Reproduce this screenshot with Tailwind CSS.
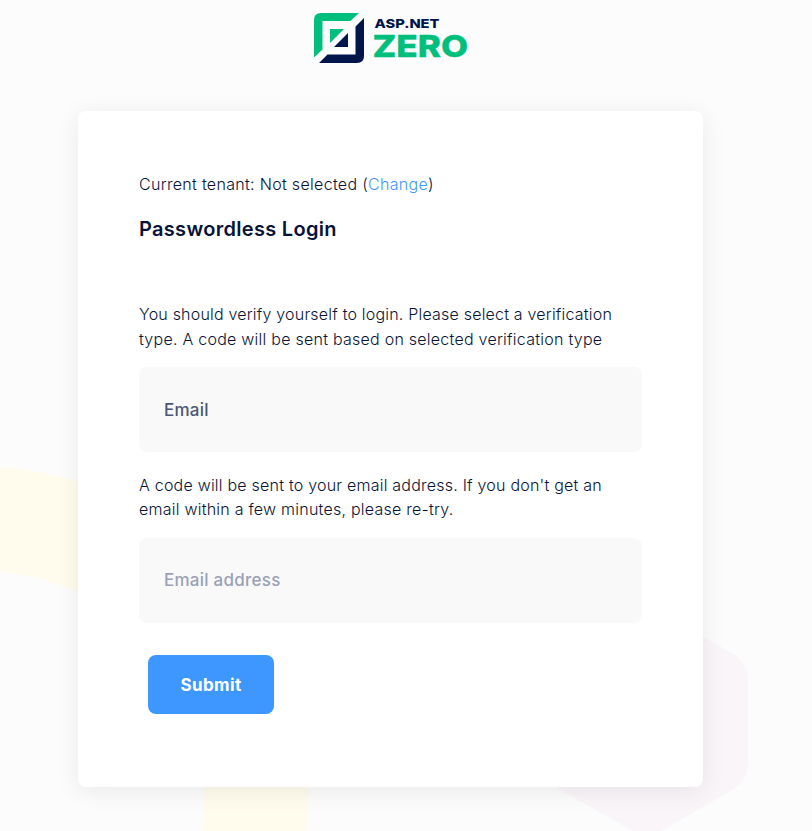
<!DOCTYPE html>
<html lang="en">
<head>
<meta charset="utf-8">
<title>Passwordless Login</title>
<script src="https://cdn.jsdelivr.net/npm/@tailwindcss/browser@4"></script>
</head>
<body class="relative h-[831px] w-[812px] overflow-hidden bg-[#fcfcfc] font-['Inter',sans-serif] text-[#071437]">
<svg class="absolute inset-0" width="812" height="831" viewBox="0 0 812 831" aria-hidden="true">
  <circle cx="-17.500" cy="793" r="274" fill="none" stroke="#fffbed" stroke-width="104"/>
  <path d="M662 613.500L731 652.500Q748 663 748 681V763Q748 781 731 790.800L662 830.700Q647 839.500 632 830.700L563 791.300Q546 781 546 763V681Q546 663 563 653.500L632 613.500Q647 605 662 613.500Z" fill="#faf5f9"/>
</svg>
<div class="relative flex flex-col">
  <header class="flex h-[111px] pt-[13px] pl-[314px]">
    <svg width="156" height="50" viewBox="0 0 156 50" role="img" aria-label="ASP.NET ZERO">
      <path d="M7 0H45L36.300 8H8.500V36.500L0 44.500V7Q0 0 7 0Z" fill="#00bf7c"/>
      <path d="M50 5V43Q50 50 43 50H5L13.500 41.500H41.500V13.500Z" fill="#00154b"/>
      <path d="M16 16H30L16 30Z" fill="#00bf7c"/>
      <path d="M34 20V34H20Z" fill="#00154b"/>
      <text x="60.500" y="15.200" font-size="12.300" font-weight="800" textLength="65" lengthAdjust="spacingAndGlyphs" fill="#00154b">ASP.NET</text>
      <text x="58.500" y="43.500" font-size="30" font-weight="800" textLength="95.500" lengthAdjust="spacingAndGlyphs" fill="#00bf7c" stroke="#00bf7c" stroke-width="0.400">ZERO</text>
    </svg>
  </header>
  <main class="ml-[78px] flex h-[676px] w-[625px] flex-col rounded-[8px] bg-white px-[61px] pt-[61px] shadow-[0_4px_25px_rgba(0,0,0,0.08)]">
    <p class="h-[25px] text-[16px] leading-[25px] font-light tracking-[0.310px] whitespace-nowrap">Current tenant: Not selected (<a class="text-[#3e97ff]">Change</a>)</p>
    <h1 class="mt-[17px] h-[30px] text-[20px] leading-[30px] font-semibold tracking-[0.300px] whitespace-nowrap">Passwordless Login</h1>
    <p class="mt-[58px] text-[16px] leading-[24.500px] font-light tracking-[0.200px] whitespace-nowrap">You should verify yourself to login. Please select a verification<br><span class="tracking-[0.250px]">type. A code will be sent based on selected verification type</span></p>
    <div class="mt-[16px] flex h-[85px] w-[503px] items-center rounded-[8px] bg-[#f9f9f9] pt-[2px] pl-[25px] text-[17px] font-medium tracking-[0.250px] text-[#4b5675]">Email</div>
    <p class="mt-[21px] h-[49px] text-[16px] leading-[24px] font-light tracking-[0.220px] whitespace-nowrap">A code will be sent to your email address. If you don't get an<br><span class="tracking-[0.240px]">email within a few minutes, please re-try.</span></p>
    <div class="mt-[16px] flex h-[85px] w-[503px] items-center rounded-[8px] bg-[#f9f9f9] pl-[25px] text-[17px] font-medium tracking-[0.250px] text-[#99a1b7]">Email address</div>
    <button class="mt-[32px] ml-[9px] h-[59px] w-[126px] rounded-[8px] bg-[#3e97ff] pt-[2px] text-[17px] font-bold tracking-[0.400px] text-white">Submit</button>
  </main>
</div>
</body>
</html>
